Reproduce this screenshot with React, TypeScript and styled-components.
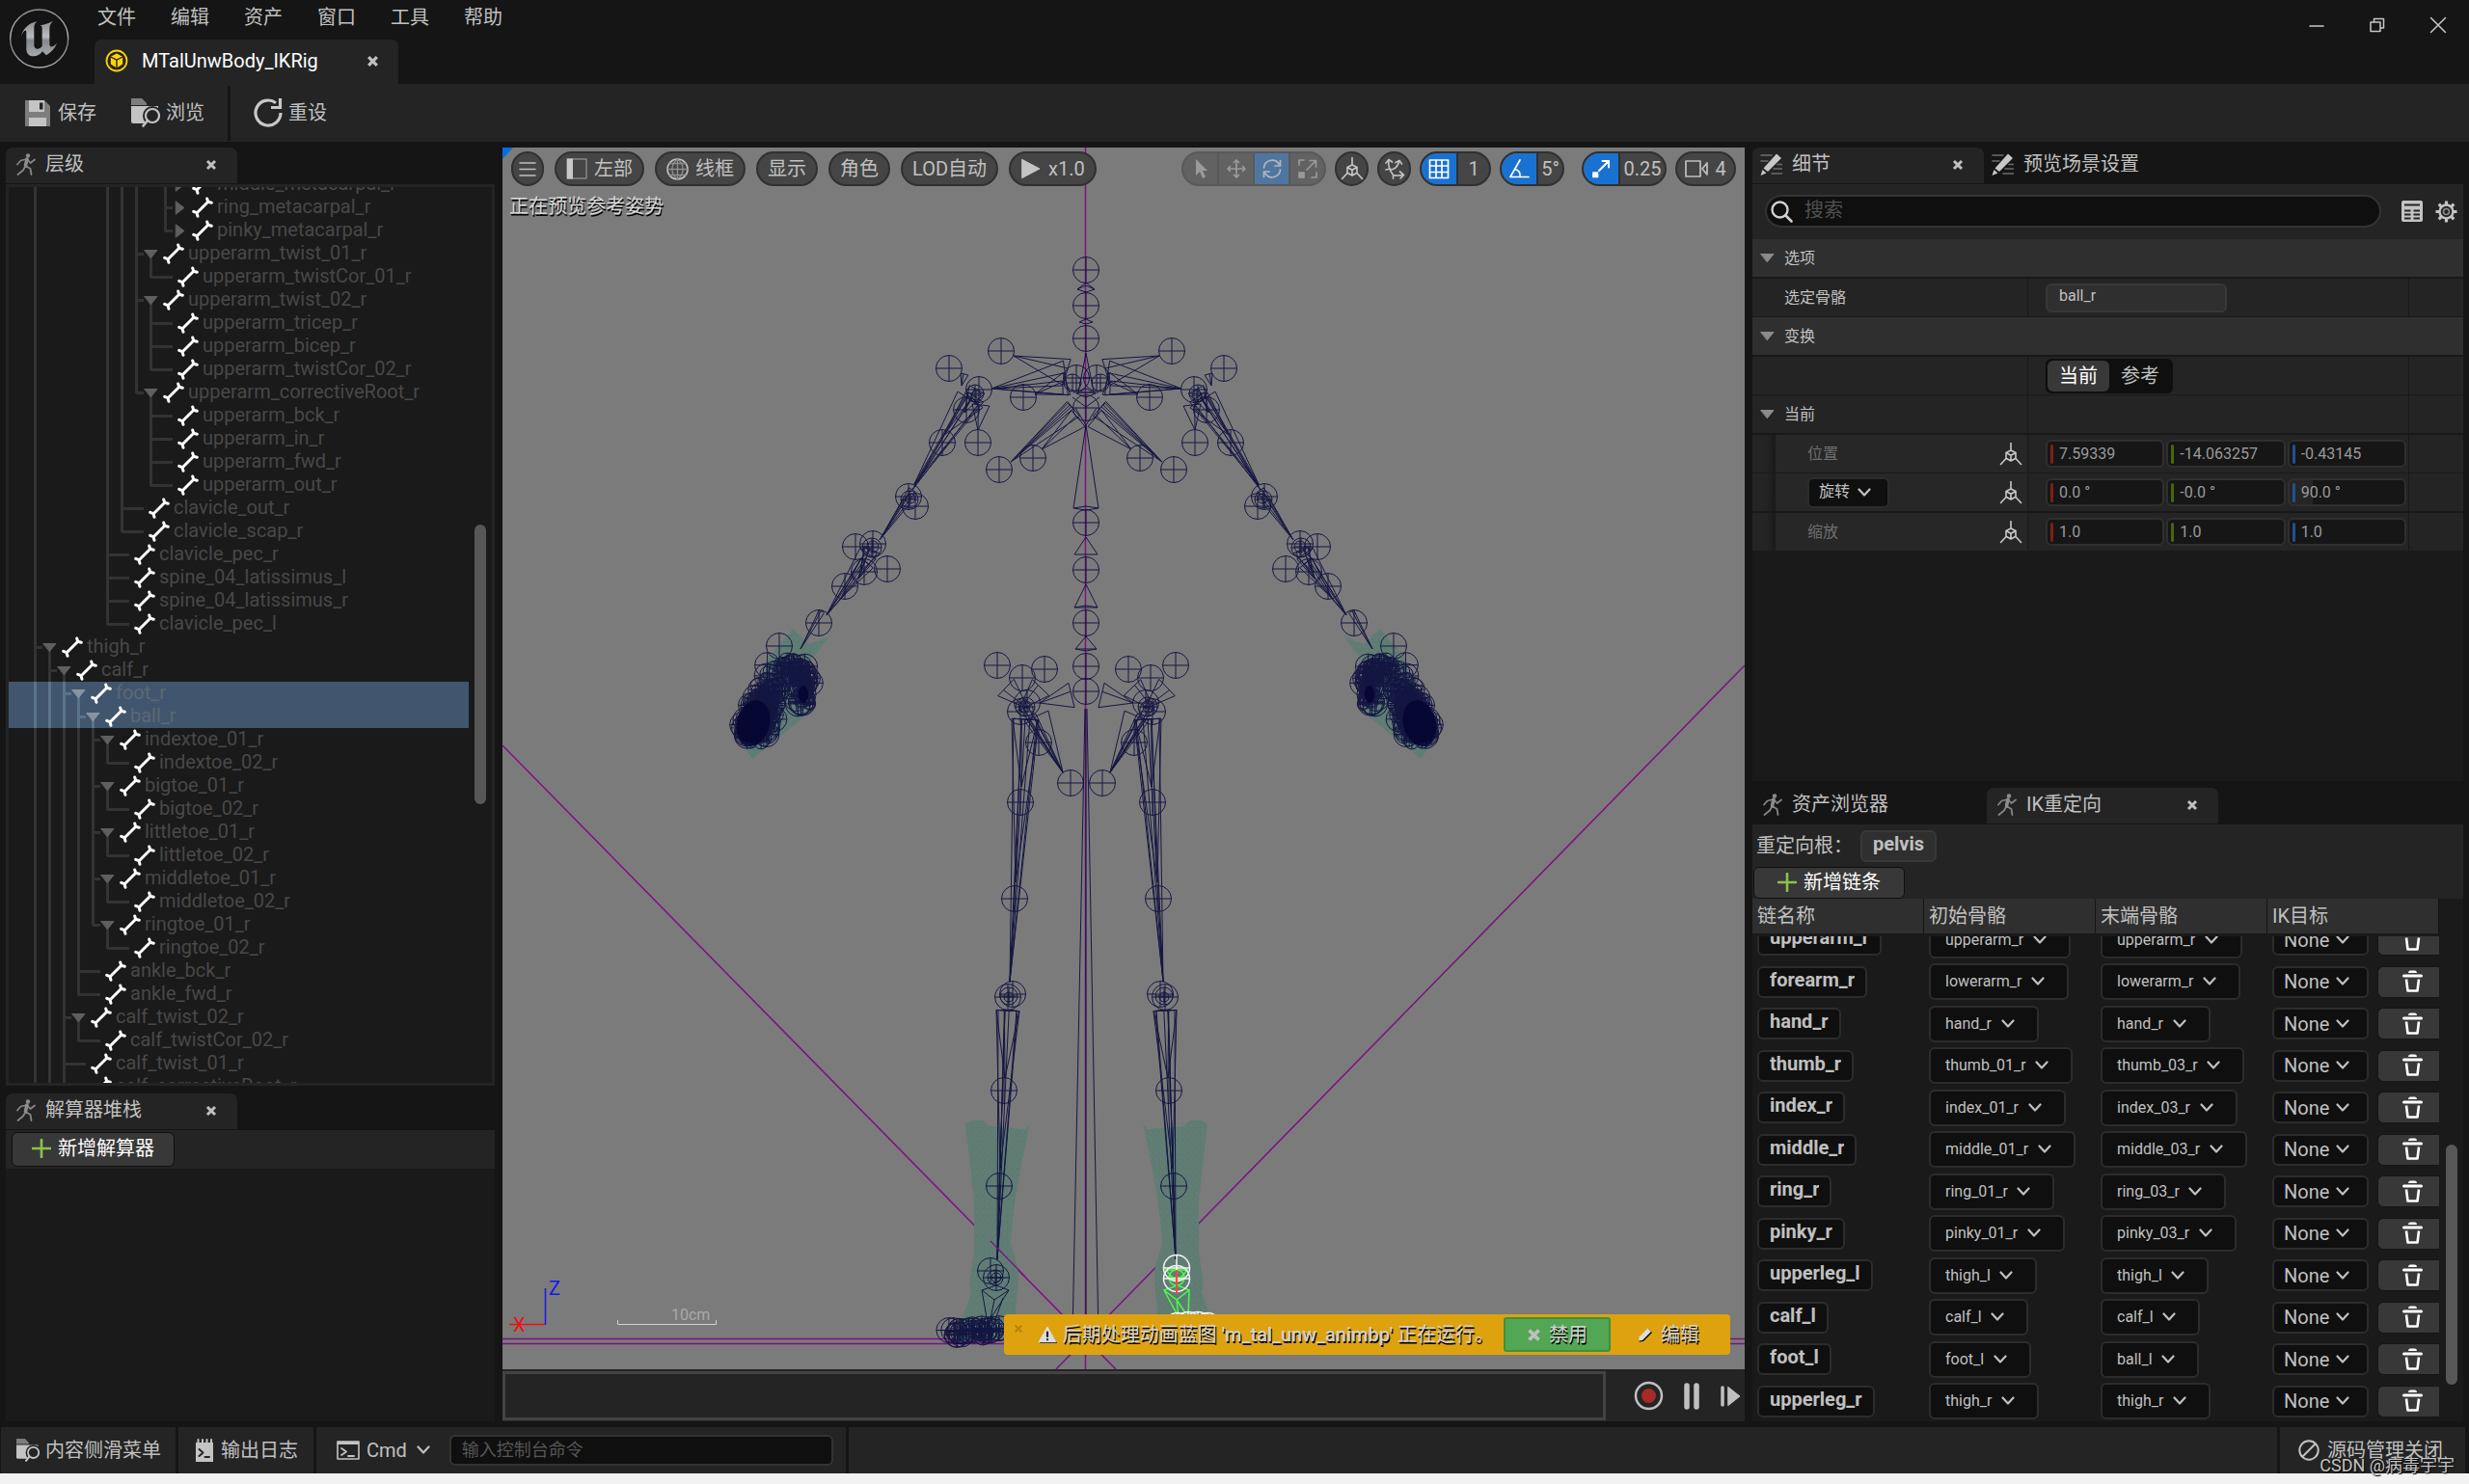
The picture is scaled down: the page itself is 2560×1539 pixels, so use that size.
import React from "react";
import styled, { createGlobalStyle, css } from "styled-components";

const GlobalStyle = createGlobalStyle`
  * { box-sizing: border-box; }
  html, body { margin: 0; background: #f2f2f2; }
  body, button, input, select {
    font-family: Roboto, "Noto Sans CJK SC", sans-serif;
    font-size: 20px;
    line-height: 24px;
    color: #c0c0c0;
  }
  button, input, select { margin: 0; }
  button { cursor: pointer; }
  input:focus, select:focus, button:focus { outline: none; }
`;

/* ---------- palette ---------- */
const c = {
  title: "#151515",
  panel: "#242424",
  recess: "#1a1a1a",
  header: "#2f2f2f",
  field: "#0f0f0f",
  line: "#333333",
  button: "#383838",
};

/* ---------- icons ---------- */
type IconProps = { w: number; h?: number; box?: string; children: React.ReactNode };
const IconSvg = styled.svg`
  display: block;
  flex: none;
  fill: none;
  stroke-linecap: round;
  stroke-linejoin: round;
`;
const Icon = ({ w, h = w, box, children }: IconProps) => (
  <IconSvg width={w} height={h} viewBox={box ?? `0 0 ${w} ${h}`} aria-hidden="true">
    {children}
  </IconSvg>
);

const Logo = () => (
  <Icon w={64} box="29 24 192 192">
    <defs>
      <linearGradient id="steel" x1="0" y1="0" x2="0" y2="1">
        <stop offset="0" stopColor="#8b8d90" />
        <stop offset="0.45" stopColor="#b9bbbe" />
        <stop offset="0.55" stopColor="#85898d" />
        <stop offset="1" stopColor="#a5a9ad" />
      </linearGradient>
    </defs>
    <circle cx="124" cy="120" r="90" fill="#141414" stroke="url(#steel)" strokeWidth="4" />
    <path
      fill="url(#steel)"
      d="M68 112C74 88 92 72 118 66C110 72 108 78 108 86V140C108 149 114 153 120 152C126 151 130 147 133 143V86C133 82 130 80 126 79C140 77 152 73 167 65C159 73 156 80 156 88V136C156 144 160 147 165 145C170 143 174 139 179 135C172 152 160 164 146 172L134 160C127 170 117 175 107 175C93 175 84 167 84 152V101C84 94 81 92 77 97C73 101 71 106 68 112Z"
    />
  </Icon>
);

const CloseIcon = ({ size = 12, width = 3 }) => (
  <Icon w={size} box="0 0 12 12">
    <path d="M2 2L10 10M10 2L2 10" stroke="#c0c0c0" strokeWidth={width} strokeLinecap="butt" />
  </Icon>
);

const CubeBadge = () => (
  <Icon w={24}>
    <circle cx="12" cy="12" r="10.5" stroke="#ffd400" strokeWidth="1.8" />
    <path d="M12 4.6L18.2 7.8V15.6L12 19.4L5.8 15.6V7.8Z" fill="#ffd400" />
    <path d="M5.8 8L12 11.2L18.2 8M12 11.2V19.4" stroke="#242424" strokeWidth="1.4" />
  </Icon>
);

const SaveIcon = () => (
  <Icon w={28} h={27}>
    <path d="M0 0H20L26 6V27H0Z" fill="#7d7d7d" />
    <path d="M4 0H20V12H4ZM4 18H22V27H4Z" fill="#c4c4c4" />
    <path d="M15 2.500H18.500V9.500H15Z" fill="#242424" />
  </Icon>
);

const BrowseIcon = ({ size = 30 }) => (
  <Icon w={size} box="0 0 30 30">
    <path d="M0 0H11L16 5V7H0Z" fill="#7d7d7d" />
    <path d="M0 8H28V10L13 26H2Q0 26 0 24Z" fill="#c4c4c4" />
    <circle cx="22" cy="18" r="10" fill="#242424" />
    <circle cx="22" cy="18" r="7" stroke="#c4c4c4" strokeWidth="2.200" />
    <path d="M17 23L12.500 28.500" stroke="#c4c4c4" strokeWidth="2.600" />
  </Icon>
);

const ResetIcon = () => (
  <Icon w={30}>
    <path d="M28 15A13 13 0 1 1 23 4.800" stroke="#c8c8c8" strokeWidth="3.200" strokeLinecap="butt" />
    <path d="M18 9.500H27.500V0" stroke="#c8c8c8" strokeWidth="3.200" strokeLinecap="butt" strokeLinejoin="miter" />
  </Icon>
);

const RunnerIcon = () => (
  <Icon w={20} h={24}>
    <circle cx="12" cy="2.500" r="2.200" fill="#8c8c8c" />
    <path
      d="M10.500 6L4.500 7.500L1 11.500M11.500 6.500L14.500 10L19 6.500M11 6L9.500 13L7 17.500L1.500 22M9.500 13L14.500 16L15.500 22"
      stroke="#858585"
      strokeWidth="1.800"
    />
    <path d="M11 6L9.500 12.500" stroke="#8c8c8c" strokeWidth="3.600" />
  </Icon>
);

const PencilListIcon = () => (
  <Icon w={23} h={24}>
    <path d="M1 2H12M1 8H8M14 16H23M12 21H23M18 11.500H23" stroke="#6c6c6c" strokeWidth="1.600" />
    <path d="M17 0.500L22 5L8 19L3.500 15.500Z" fill="#c8c8c8" />
    <path d="M2.500 17L6.500 20.500L0.500 23Z" fill="#c8c8c8" />
  </Icon>
);

const BoneIcon = () => (
  <Icon w={22}>
    <path
      d="M5 17L17 5M15.700 2L16.700 5.300L20.300 6.300M1.700 15.300L5 16.700L6 20.300"
      stroke="#ffffff"
      strokeWidth="3"
    />
  </Icon>
);

const Caret = ({ open = true, color = "#5f5f5f" }) => (
  <Icon w={15}>
    {open ? (
      <path d="M1 3.500H14L7.500 11.500Z" fill={color} stroke={color} />
    ) : (
      <path d="M3.500 1L12 7.500L3.500 14Z" fill={color} stroke={color} />
    )}
  </Icon>
);

const ChevronIcon = () => (
  <Icon w={14} h={10}>
    <path d="M1.500 1.500L7 7.500L12.500 1.500" stroke="#c0c0c0" strokeWidth="2.200" />
  </Icon>
);

const PlusIcon = () => (
  <Icon w={20}>
    <path d="M10 1V19M1 10H19" stroke="#8bc24a" strokeWidth="2.600" />
  </Icon>
);

const AxesCubeIcon = () => (
  <Icon w={24}>
    <path
      d="M12 0.500V8M12 8L17 10.500V16.300L12 19L7 16.300V10.500ZM7 10.500L12 13.300L17 10.500M12 13.300V19M7 16.500L1.500 22.500M17 16.500L22.500 22.500"
      stroke="#c8c8c8"
      strokeWidth="1.600"
    />
  </Icon>
);

const TrashIcon = () => (
  <Icon w={21} h={24}>
    <path d="M6 3Q6 0.500 8 0.500H13Q15 0.500 15 3Z" fill="#fff" />
    <path d="M1.500 6H19.500" stroke="#fff" strokeWidth="3" />
    <path d="M4 9.500L5.500 21.500H15.500L17 9.500" stroke="#fff" strokeWidth="2.600" strokeLinecap="butt" />
  </Icon>
);

/* ---------- shell ---------- */
const Window = styled.div`
  display: flex;
  flex-direction: column;
  height: 100vh;
  min-height: 1000px;
  padding-bottom: 11px;
  background: linear-gradient(#f2f2f2, #f2f2f2) 0 100% / 100% 11px no-repeat ${c.title};
`;
const TitleBar = styled.header`
  display: flex;
  height: 87px;
  flex: none;
  padding-left: 9px;
`;
const LogoBox = styled.div`
  width: 89px;
  padding-top: 8px;
`;
const TitleMain = styled.div`
  display: flex;
  flex-direction: column;
  justify-content: space-between;
  flex: 1;
`;
const MenuBar = styled.nav`
  display: flex;
  gap: 36px;
  padding: 6px 0 0 3px;
`;
const PlainButton = styled.button`
  display: flex;
  align-items: center;
  gap: 6px;
  padding: 0;
  border: 0;
  background: none;
`;
const DocTab = styled.div`
  display: flex;
  align-items: center;
  width: 315px;
  height: 46px;
  padding: 0 20px 2px 11px;
  border-radius: 7px 7px 0 0;
  background: ${c.panel};
  color: #ffffff;
  span { flex: 1; padding-left: 14px; }
`;
const WindowButtons = styled.div`
  display: flex;
  gap: 45px;
  height: 52px;
  padding-right: 23px;
`;
const Toolbar = styled.div`
  display: flex;
  align-items: center;
  flex: none;
  height: 60px;
  padding-left: 26px;
  background: ${c.panel};
`;
const ToolbarGroup = styled.div`
  display: flex;
  align-items: center;
  gap: 36px;
  height: 57px;
  padding-right: 24px;
  & + & { padding-left: 24px; border-left: 3px solid ${c.title}; }
`;
const Workspace = styled.main`
  display: grid;
  grid-template-columns: 507px minmax(0, 1fr) 737px;
  gap: 8px;
  flex: 1;
  min-height: 0;
  padding: 6px;
`;
const Column = styled.div<{ $rows: string; $gap: number }>`
  display: grid;
  grid-template-rows: ${(p) => p.$rows};
  gap: ${(p) => p.$gap}px;
  min-height: 0;
`;
const Dock = styled.section`
  display: flex;
  flex-direction: column;
  min-height: 0;
  overflow: hidden;
`;
const TabStrip = styled.div<{ $gap?: number }>`
  display: flex;
  flex: none;
  gap: ${(p) => p.$gap ?? 0}px;
  margin-bottom: 1px;
`;
const Tab = styled.div<{ $active?: boolean }>`
  display: flex;
  align-items: center;
  width: 240px;
  height: 37px;
  padding: 0 21px 2px 11px;
  border-radius: 7px 7px 0 0;
  background: ${(p) => (p.$active ? c.panel : "transparent")};
  span { flex: 1; padding: 0 0 2px 10px; white-space: nowrap; }
`;
const DetailTabs = styled(TabStrip)`
  ${Tab} { padding-left: 8px; }
`;
const DockTab = ({ icon, label, active, onClose }: { icon: React.ReactNode; label: string; active?: boolean; onClose?: boolean }) => (
  <Tab $active={active}>
    {icon}
    <span>{label}</span>
    {onClose && (
      <PlainButton aria-label="关闭">
        <CloseIcon />
      </PlainButton>
    )}
  </Tab>
);

const Track = styled.div`
  display: flex;
  flex-direction: column;
  width: 12px;
  flex: none;
`;
const TrackPart = styled.div<{ $grow: number; $thumb?: boolean }>`
  flex: ${(p) => p.$grow} 0 0;
  border-radius: 6px;
  background: ${(p) => (p.$thumb ? "#575757" : "transparent")};
`;
const ScrollTrack = ({ before, thumb, after }: { before: number; thumb: number; after: number }) => (
  <Track>
    <TrackPart $grow={before} />
    <TrackPart $grow={thumb} $thumb />
    <TrackPart $grow={after} />
  </Track>
);

/* ---------- bone hierarchy ---------- */
type Bone = { name: string; depth: number; state: "leaf" | "open" | "closed"; selected?: boolean };
const leaf = (depth: number, name: string): Bone => ({ depth, name, state: "leaf" });
const open = (depth: number, name: string, selected = false): Bone => ({ depth, name, state: "open", selected });
const closed = (depth: number, name: string): Bone => ({ depth, name, state: "closed" });

const bones: Bone[] = [
  closed(10, "middle_metacarpal_r"),
  closed(10, "ring_metacarpal_r"),
  closed(10, "pinky_metacarpal_r"),
  open(8, "upperarm_twist_01_r"),
  leaf(9, "upperarm_twistCor_01_r"),
  open(8, "upperarm_twist_02_r"),
  leaf(9, "upperarm_tricep_r"),
  leaf(9, "upperarm_bicep_r"),
  leaf(9, "upperarm_twistCor_02_r"),
  open(8, "upperarm_correctiveRoot_r"),
  leaf(9, "upperarm_bck_r"),
  leaf(9, "upperarm_in_r"),
  leaf(9, "upperarm_fwd_r"),
  leaf(9, "upperarm_out_r"),
  leaf(7, "clavicle_out_r"),
  leaf(7, "clavicle_scap_r"),
  leaf(6, "clavicle_pec_r"),
  leaf(6, "spine_04_latissimus_l"),
  leaf(6, "spine_04_latissimus_r"),
  leaf(6, "clavicle_pec_l"),
  open(1, "thigh_r"),
  open(2, "calf_r"),
  open(3, "foot_r", true),
  open(4, "ball_r", true),
  open(5, "indextoe_01_r"),
  leaf(6, "indextoe_02_r"),
  open(5, "bigtoe_01_r"),
  leaf(6, "bigtoe_02_r"),
  open(5, "littletoe_01_r"),
  leaf(6, "littletoe_02_r"),
  open(5, "middletoe_01_r"),
  leaf(6, "middletoe_02_r"),
  open(5, "ringtoe_01_r"),
  leaf(6, "ringtoe_02_r"),
  leaf(4, "ankle_bck_r"),
  leaf(4, "ankle_fwd_r"),
  open(3, "calf_twist_02_r"),
  leaf(4, "calf_twistCor_02_r"),
  leaf(3, "calf_twist_01_r"),
  open(3, "calf_correctiveRoot_r"),
];
/* levels whose siblings continue below the last loaded row */
const continuing = [0, 1, 2];

const hasLaterSibling = (index: number, level: number) => {
  for (let j = index + 1; j < bones.length; j++) {
    if (bones[j].depth <= level) return false;
    if (bones[j].depth === level + 1) return true;
  }
  return continuing.includes(level);
};

const TreePanel = styled.div`
  display: flex;
  flex: 1;
  gap: 6px;
  min-height: 0;
  padding-right: 6px;
  border: 3px solid ${c.panel};
  background: ${c.recess};
`;
const TreeView = styled.ul`
  flex: 1;
  margin: 0;
  padding: 0;
  overflow: hidden;
  list-style: none;
`;
const TreeRow = styled.li<{ $selected?: boolean }>`
  --guide: ${(p) => (p.$selected ? "#5c748a" : "#333333")};
  display: flex;
  align-items: center;
  height: 24px;
  padding-left: 20px;
  background: ${(p) => (p.$selected ? "#41566e" : "transparent")};
  color: ${(p) => (p.$selected ? "#5d6873" : "#484848")};
  white-space: nowrap;
  &:first-child { margin-top: -15px; }
`;
const bar = (pos: string, size: string) =>
  `linear-gradient(var(--guide), var(--guide)) ${pos} / ${size} no-repeat`;
const Guide = styled.span<{ $down: boolean; $branch: boolean }>`
  align-self: stretch;
  width: 15px;
  flex: none;
  background: ${(p) =>
    [
      p.$down ? bar("6px 0", "3px 100%") : p.$branch ? bar("6px 0", "3px 13px") : "",
      p.$branch ? bar("100% 11px", "8px 3px") : "",
    ]
      .filter(Boolean)
      .join(", ") || "none"};
`;
const Toggle = styled.span<{ $state: Bone["state"] }>`
  display: flex;
  align-items: center;
  align-self: stretch;
  width: 15px;
  margin-right: 5px;
  flex: none;
  background: ${(p) =>
    p.$state === "leaf" ? bar("0 11px", "15px 3px") : p.$state === "open" ? bar("6px 12px", "3px 12px") : "none"};
`;
const BoneName = styled.span`
  padding: 0 0 2px 4px;
`;

const Hierarchy = () => (
  <TreePanel>
    <TreeView>
      {bones.map((bone, i) => (
        <TreeRow key={bone.name} $selected={bone.selected}>
          {Array.from({ length: bone.depth }, (_, level) => (
            <Guide key={level} $down={hasLaterSibling(i, level)} $branch={level === bone.depth - 1} />
          ))}
          <Toggle $state={bone.state}>
            {bone.state !== "leaf" && (
              <Caret open={bone.state === "open"} color={bone.selected ? "#8794a1" : "#5f5f5f"} />
            )}
          </Toggle>
          <BoneIcon />
          <BoneName>{bone.name}</BoneName>
        </TreeRow>
      ))}
    </TreeView>
    <ScrollTrack before={350} thumb={290} after={289} />
  </TreePanel>
);

const AddButton = styled.button<{ $height: number; $pad: number }>`
  display: flex;
  align-items: center;
  gap: 7px;
  height: ${(p) => p.$height}px;
  padding: 0 ${(p) => p.$pad}px 2px;
  border: 1px solid ${c.field};
  border-radius: 6px;
  background: ${c.button};
  color: #ffffff;
  white-space: nowrap;
`;
const StackToolbar = styled.div`
  flex: none;
  padding: 2px 6px;
  background: ${c.panel};
`;
const EmptyBody = styled.div`
  flex: 1;
  background: ${c.recess};
`;

/* ---------- viewport drawing ---------- */
const NAVY = "#06063a";
type P = [number, number];

const joints: P[] = [
  [1038, 364], [984, 382], [1015, 404], [1061, 412], [1116, 392], [1002, 425], [977, 459], [1014, 459],
  [1071, 475], [1036, 487], [942, 515], [949, 525], [905, 564], [887, 567], [920, 590], [896, 593],
  [876, 608], [849, 646], [808, 670], [1034, 690], [1060, 703], [1083, 694], [1058, 738], [1077, 770],
  [1110, 812], [1058, 832], [1052, 932], [1045, 1034], [1050, 1031], [1041, 1131], [1036, 1230], [1065, 729],
];
const smallJoints: [number, number, number][] = [
  [1011, 408, 9], [1012, 410, 5], [943, 518, 9], [944, 517, 5], [904, 568, 10], [905, 567, 6],
  [1063, 733, 10], [1062, 733, 6], [1046, 1033, 9], [1046, 1034, 5], [1112, 397, 9],
];
const spine = [280, 317, 351, 423, 542, 591, 646, 691, 717];
/* wedge: x, y of the base, x, y of the tip, half width of the base */
const wedges: [number, number, number, number, number][] = [
  [1106, 386, 1051, 369, 14], [1105, 392, 1028, 403, 18], [1106, 398, 1073, 409, 12], [1102, 402, 1030, 403, 7],
  [1113, 424, 1048, 479, 10], [1118, 434, 1080, 466, 11], [1110, 421, 1048, 479, 4],
  [1004, 413, 948, 502, 13], [1008, 416, 946, 508, 7], [1010, 415, 979, 451, 12], [1017, 420, 1014, 446, 9],
  [1012, 412, 948, 504, 9], [1013, 404, 1000, 428, 9],
  [1000, 388, 997, 400, 4], [946, 508, 914, 557, 4], [940, 520, 912, 560, 4],
  [900, 574, 857, 638, 10], [899, 584, 872, 620, 8], [903, 571, 890, 600, 7], [852, 634, 830, 673, 3],
  [897, 582, 857, 638, 5], [904, 570, 893, 592, 9],
  [1043, 713, 1066, 735, 12], [1079, 713, 1056, 737, 12], [1111, 721, 1078, 729, 13],
  [1076, 742, 1102, 801, 12], [1068, 744, 1102, 801, 7], [1062, 734, 1102, 801, 4],
  [1063, 746, 1059, 816, 13], [1063, 746, 1053, 915, 14], [1063, 746, 1047, 1018, 12], [1070, 746, 1047, 1018, 7],
  [1045, 1048, 1042, 1118, 12], [1045, 1048, 1037, 1212, 12], [1045, 1048, 1034, 1306, 10], [1048, 1048, 1034, 1306, 6],
];
const wedgePath = ([bx, by, tx, ty, w]: [number, number, number, number, number]) => {
  const len = Math.hypot(tx - bx, ty - by);
  const nx = (-(ty - by) / len) * w;
  const ny = ((tx - bx) / len) * w;
  return `M${bx + nx} ${by + ny}L${tx} ${ty}L${bx - nx} ${by - ny}ZM${bx + nx * 0.3} ${by + ny * 0.3}L${tx} ${ty}`;
};
const Joint = ({ x, y, r = 13.5 }: { x: number; y: number; r?: number }) => (
  <path
    d={`M${x - r} ${y}A${r} ${r} 0 1 1 ${x + r} ${y}A${r} ${r} 0 1 1 ${x - r} ${y}H${x + r}M${x} ${y - r}V${y + r}`}
  />
);

/* repeatable scatter used for the dense finger and toe joints */
const scatter = (count: number, seed: number, place: (t: number, a: number, b: number) => P): P[] => {
  let s = seed;
  const next = () => (s = (s * 16807) % 2147483647) / 2147483647;
  return Array.from({ length: count }, () => place(next(), next() + next() - 1, next() + next() - 1));
};
const fingers = scatter(170, 77, (t, a, b) => [808 - 28 * Math.sqrt(t) + a * 17, 696 + 66 * Math.sqrt(t) + b * 12]);
const knuckles = scatter(110, 53, (t, a, b) => [790 - 12 * t + a * 15, 716 + 46 * t + b * 9]);
const palm = scatter(24, 15, (t, a, b) => [812 + 18 * t + a * 10, 694 + b * 10]);
const thumb = scatter(56, 31, (t, a, b) => [834 + a * 9, 694 + t * 36 + b * 6]);
const toes = scatter(34, 9, (t, a, b) => [984 + t * 52 + a * 4, 1380 + b * 6]);

const HalfBody = () => (
  <g>
    <path
      d="M1001 1165L1008 1162H1019L1027 1168L1063 1171L1068 1165C1061 1200 1051 1240 1048 1288C1050 1300 1056 1310 1056 1321C1056 1340 1052 1350 1053 1390H990L1007 1340C1002 1330 1010 1310 1010 1292V1245Z"
      fill="url(#mesh)"
    />
    <path d="M822 652L839 668L860 660L840 686L838 740L780 787L768 770L798 680Z" fill="url(#mesh)" />
    <g stroke={NAVY} fill="none" opacity="0.85">
      {joints.map(([x, y], i) => <Joint key={i} x={x} y={y} />)}
      {smallJoints.map(([x, y, r], i) => <Joint key={i} x={x} y={y} r={r} />)}
      {wedges.map((w, i) => <path key={i} d={wedgePath(w)} />)}
      {fingers.map(([x, y], i) => <Joint key={i} x={x} y={y} r={i % 3 ? 8 : 13} />)}
      {knuckles.map(([x, y], i) => <Joint key={i} x={x} y={y} r={5} />)}
      {palm.map(([x, y], i) => <Joint key={i} x={x} y={y} r={9} />)}
      {thumb.map(([x, y], i) => <Joint key={i} x={x} y={y} r={i % 3 ? 6 : 13} />)}
    </g>
    <g fill="#02022f" opacity="0.75">
      <ellipse cx="781" cy="750" rx="17" ry="24" transform="rotate(14 781 750)" />
      <ellipse cx="833" cy="720" rx="5" ry="9" />
    </g>
  </g>
);

const Scene = styled.svg`
  position: absolute;
  inset: 0;
  display: block;
  width: 100%;
  height: 100%;
`;
const SkeletonScene = () => (
  <Scene viewBox="521 153 1288 1267" preserveAspectRatio="xMidYMid slice" role="img" aria-label="骨骼">
    <defs>
      <pattern id="mesh" width="6" height="7" patternUnits="userSpaceOnUse">
        <rect width="6" height="7" fill="#637d75" />
        <path d="M0 0H6M0 0V7M0 7L6 0" stroke="#587b70" strokeWidth="1" fill="none" />
      </pattern>
    </defs>
    <path d="M521 153H532L521 165Z" fill="#0070e0" />
    <g stroke="#7d1180" strokeWidth="1.500" fill="none">
      <path d="M521 773L1157 1420M1809 690L1095 1420" />
      <path d="M521 1388.500H1809M521 1393.500H1809" />
      <path d="M1125.500 153V1420" strokeWidth="1.500" />
    </g>
    <HalfBody />
    <g transform="translate(2253 0) scale(-1 1)">
      <HalfBody />
    </g>
    <path d="M1027 1287L1063 1324" stroke="#7d1180" strokeWidth="1.200" />
    <g stroke={NAVY} fill="none" opacity="0.85">
      {spine.map((y) => <Joint key={y} x={1126} y={y} />)}
      <path d="M1126 293L1117 300L1126 303L1135 300ZM1126 331L1119 334L1126 336L1133 334ZM1117 300L1126 296L1135 300" />
      <path d="M1126 366L1118 407H1134ZM1116 408L1126 403L1136 408L1126 412Z M1113 407H1139" />
      <path d="M1126 441L1113 527L1126 529L1139 527ZM1113 527L1126 525L1139 527" />
      <path d="M1126 557L1114 575H1138ZM1126 606L1114 630L1126 628L1138 630ZM1126 660L1115 673L1126 675L1137 673ZM1114 630H1138M1115 673H1137" />
      <path d="M1126 422L1112 412M1126 422L1140 412M1115 423L1126 441L1137 423" />
      <path d="M1125 735L1112 1388M1127 735L1139 1388M1126 735V1388" />
      <Joint x={1027} y={1318} />
      <Joint x={1033} y={1325} />
      <Joint x={1032} y={1325} r={8} />
      <Joint x={1033} y={1325} r={5} />
      <path d="M1018 1338L1031 1348L1046 1338L1033 1333ZM1018 1338L1024 1372L1046 1338M1031 1348L1026 1372M1040 1346L1030 1374" />
      {toes.map(([x, y], i) => <Joint key={i} x={x} y={y} r={i % 2 ? 9 : 13} />)}
    </g>
    <g fill="none" strokeWidth="1.500">
      <g stroke="#4dfa4d">
        <path d="M1207 1338L1220 1348L1233 1338L1221 1333ZM1207 1338L1222 1366L1220 1348M1233 1338L1232 1366L1220 1348M1209 1317H1231L1220 1330Z" />
        <Joint x={1220} y={1325} r={8} />
      </g>
      <g stroke="#f2f2f2">
        <Joint x={1220} y={1315} />
        <Joint x={1220} y={1326} />
        <Joint x={1221} y={1375} />
        <Joint x={1232} y={1374} />
        <Joint x={1242} y={1374} />
        <Joint x={1252} y={1375} />
      </g>
      <path d="M1220 1317V1342" stroke="#ff4a3a" strokeWidth="2" />
    </g>
    <path d="M565.500 1336V1374" stroke="#1616f0" strokeWidth="1.500" />
    <path d="M528 1373.500H565" stroke="#ee1010" strokeWidth="1.500" />
    <path d="M640.500 1369V1373.500H742.500V1369" stroke="#d0d0d0" fill="none" />
    <g fontFamily="Roboto, sans-serif" fontSize="20">
      <text x="569" y="1343" fill="#1616f0">Z</text>
      <text x="532" y="1381" fill="#ee1010">X</text>
      <text x="696" y="1369" fill="#a9a9a9" fontSize="16">10cm</text>
    </g>
  </Scene>
);

/* ---------- viewport ui ---------- */
const ViewportDock = styled.section`
  display: flex;
  flex-direction: column;
  min-height: 0;
`;
const Viewport = styled.div`
  position: relative;
  display: flex;
  flex-direction: column;
  flex: 1;
  min-height: 0;
  overflow: hidden;
  background: #7b7b7b;
`;
const Overlay = styled.div`
  position: relative;
  display: flex;
  justify-content: space-between;
  padding: 4px 9px 0;
`;
const PillRow = styled.div<{ $gap: number }>`
  display: flex;
  gap: ${(p) => p.$gap}px;
`;
const pill = css`
  border: 2px solid #303030;
  border-radius: 18px;
  background: #454545;
`;
const Pill = styled.button<{ $width?: number }>`
  ${pill}
  display: flex;
  align-items: center;
  justify-content: center;
  gap: 7px;
  height: 36px;
  width: ${(p) => (p.$width ? `${p.$width}px` : "auto")};
  padding: 0 ${(p) => (p.$width ? 0 : 10)}px;
  white-space: nowrap;
`;
const Segmented = styled.div<{ $width: number; $dim?: boolean; $spaced?: boolean }>`
  ${pill}
  display: flex;
  width: ${(p) => p.$width}px;
  height: 36px;
  overflow: hidden;
  margin-left: ${(p) => (p.$spaced ? 9 : 0)}px;
  opacity: ${(p) => (p.$dim ? 0.45 : 1)};
`;
const Segment = styled.button<{ $on?: boolean; $fixed?: boolean }>`
  display: flex;
  flex: ${(p) => (p.$fixed ? "0 0 36px" : "1 1 0")};
  align-items: center;
  justify-content: center;
  padding: 0;
  border: 0;
  background: ${(p) => (p.$on ? "#1a72d0" : "transparent")};
  & + & { border-left: 2px solid #303030; }
`;
const ViewportNote = styled.p`
  position: relative;
  margin: 9px 0 0 7px;
  color: #d6d6d6;
  text-shadow: 1px 2px 0 #000000;
`;
const Notice = styled.div`
  position: absolute;
  right: 15px;
  bottom: 15px;
  display: flex;
  align-items: center;
  height: 42px;
  padding: 0 4px 0 10px;
  border-radius: 4px;
  background: #dda20d;
  color: #d0d0d0;
  text-shadow: 1px 2px 0 #000000;
  white-space: nowrap;
`;
const NoticeText = styled.span`
  padding: 0 10px 0 6px;
  b { font-weight: 500; }
`;
const NoticeDismiss = styled(PlainButton)`
  align-self: flex-start;
  padding: 10px 15px 0 0;
  opacity: 0.5;
  path { stroke: #8a6000; }
`;
const NoticeButton = styled.button<{ $green?: boolean }>`
  display: flex;
  align-items: center;
  justify-content: center;
  gap: 8px;
  width: ${(p) => (p.$green ? 111 : 120)}px;
  height: 36px;
  border: 2px solid ${(p) => (p.$green ? "#3c913f" : "transparent")};
  border-radius: 3px;
  background: ${(p) => (p.$green ? "#53a653" : "transparent")};
  color: #d0d0d0;
  text-shadow: 1px 2px 0 #000000;
`;
const Timeline = styled.div`
  display: flex;
  flex: none;
  gap: 29px;
  height: 54px;
  padding: 2px 4px 1px 0;
  background: ${c.panel};
`;
const TimelineTrack = styled.div`
  flex: 1;
  border: 3px solid #434343;
`;
const Transport = styled.div`
  display: flex;
  align-items: center;
  gap: 21px;
`;

const ToolIcon = ({ children, color = "#c0c0c0" }: { children: React.ReactNode; color?: string }) => (
  <Icon w={24}>
    <g stroke={color} strokeWidth="1.700">{children}</g>
  </Icon>
);

const ViewportPanel = () => (
  <ViewportDock>
    <Viewport>
      <SkeletonScene />
      <Overlay>
        <PillRow $gap={11}>
          <Pill $width={34} aria-label="视口选项">
            <Icon w={18}><path d="M1 3H17M1 9.500H17M1 16H17" stroke="#c0c0c0" strokeWidth="1.600" /></Icon>
          </Pill>
          <Pill>
            <Icon w={22}>
              <path d="M1 1H21V21H1Z" stroke="#858585" strokeWidth="1.500" />
              <path d="M1 0.500H7V21.500H1Z" fill="#c8c8c8" />
            </Icon>
            左部
          </Pill>
          <Pill>
            <Icon w={23}>
              <circle cx="11.500" cy="11.500" r="10.500" stroke="#c0c0c0" strokeWidth="1.600" />
              <path d="M11.500 1V22M1 11.500H22M3 5.500H20M3 17.500H20M11.500 1C4 7 4 16 11.500 22C19 16 19 7 11.500 1" stroke="#8f8f8f" strokeWidth="1.300" />
            </Icon>
            线框
          </Pill>
          <Pill>显示</Pill>
          <Pill>角色</Pill>
          <Pill>LOD自动</Pill>
          <Pill>
            <Icon w={22}><path d="M2 1.500L20 11L2 20.500Z" fill="#c4c4c4" stroke="#c4c4c4" /></Icon>
            x1.0
          </Pill>
        </PillRow>
        <PillRow $gap={9}>
          <Segmented $width={150} $dim>
            <Segment aria-label="选择">
              <ToolIcon><path d="M7 2V19L11 15L14 22L17 20.500L14 14H19Z" fill="#c0c0c0" stroke="none" /></ToolIcon>
            </Segment>
            <Segment aria-label="移动">
              <ToolIcon><path d="M12 3V21M3 12H21M9.500 5.500L12 3L14.500 5.500M9.500 18.500L12 21L14.500 18.500M5.500 9.500L3 12L5.500 14.500M18.500 9.500L21 12L18.500 14.500" /></ToolIcon>
            </Segment>
            <Segment $on aria-label="旋转">
              <ToolIcon color="#ffffff"><path d="M3.500 11A8.500 8.500 0 0 1 19 7M20.500 13A8.500 8.500 0 0 1 5 17M20.500 3.500V9H15M3.500 20.500V15H9" /></ToolIcon>
            </Segment>
            <Segment aria-label="缩放">
              <ToolIcon><path d="M3 8V3H8M16 21H21V16M11 13L20 4M14 3.500H20.500V10" /><path d="M3 16H8V21H3Z" fill="#c0c0c0" /></ToolIcon>
            </Segment>
          </Segmented>
          <Pill $width={35} aria-label="坐标系"><AxesCubeIcon /></Pill>
          <Pill $width={35} aria-label="表面吸附">
            <ToolIcon>
              <path d="M6 2.500C5 8 7 14 10.500 18.500C14 19.500 17 19 21 18.500M3 6L6 2.500L9.500 5M17.500 15L21.500 18.500L18 22M8.500 13C13 12 15.500 9 16.500 5M13 5.500L17 3.500L19.500 7M3 13L7.500 12M10.500 18.500V22" />
            </ToolIcon>
          </Pill>
          <Segmented $width={74}>
            <Segment $on $fixed aria-label="网格吸附">
              <ToolIcon color="#ffffff"><path d="M2.500 3H21.500V21.500H2.500ZM2.500 9H21.500M2.500 15.500H21.500M9 3V21.500M15 3V21.500" /></ToolIcon>
            </Segment>
            <Segment>1</Segment>
          </Segmented>
          <Segmented $width={67}>
            <Segment $on $fixed aria-label="旋转吸附">
              <ToolIcon color="#ffffff"><path d="M13 3L3 20.500H22M8 12.500C12 13.500 13.500 17 13 20.500" /></ToolIcon>
            </Segment>
            <Segment>5°</Segment>
          </Segmented>
          <Segmented $width={88} $spaced>
            <Segment $on $fixed aria-label="缩放吸附">
              <ToolIcon color="#ffffff"><path d="M10 14L19.500 4.500M13.500 4H20V10.500" strokeWidth="2" /><path d="M4 16H8.500V20.500H4Z" fill="#fff" /></ToolIcon>
            </Segment>
            <Segment>0.25</Segment>
          </Segmented>
          <Pill $width={63}>
            <ToolIcon><path d="M1 4H16V20H1ZM23 6V18L18 12Z" /></ToolIcon>
            4
          </Pill>
        </PillRow>
      </Overlay>
      <ViewportNote>正在预览参考姿势</ViewportNote>
      <Notice>
        <NoticeDismiss aria-label="忽略"><CloseIcon size={10} width={2} /></NoticeDismiss>
        <Icon w={20} h={18}>
          <path d="M11 3L20 18H2Z" fill="#000" />
          <path d="M10 1.500L18.500 16.500H1.500Z" fill="#dcdcdc" stroke="#dcdcdc" strokeWidth="1.500" />
          <path d="M10 6.500V11M10 14V14.300" stroke="#222" strokeWidth="2.200" />
        </Icon>
        <NoticeText>后期处理动画蓝图 <b>'m_tal_unw_animbp'</b> 正在运行。</NoticeText>
        <NoticeButton $green><CloseIcon size={15} width={3} />禁用</NoticeButton>
        <NoticeButton>
          <Icon w={16}>
            <path d="M2 11L11 2L15 6L6 15L1.500 15.500Z" fill="#000" />
            <path d="M1.500 10.500L10.500 1.500L14 5L5 14L1 14.500Z" fill="#dcdcdc" />
          </Icon>
          编辑
        </NoticeButton>
      </Notice>
    </Viewport>
    <Timeline>
      <TimelineTrack />
      <Transport>
        <PlainButton aria-label="录制">
          <Icon w={31}><circle cx="15.500" cy="15.500" r="13.500" stroke="#c0c0c0" strokeWidth="2.500" /><circle cx="15.500" cy="15.500" r="7.500" fill="#a82a28" /></Icon>
        </PlainButton>
        <PlainButton aria-label="暂停">
          <Icon w={16} h={28}><path d="M3 3V25M13 3V25" stroke="#c0c0c0" strokeWidth="5.500" /></Icon>
        </PlainButton>
        <PlainButton aria-label="前进一帧">
          <Icon w={22}><path d="M3 2V20" stroke="#c0c0c0" strokeWidth="3.500" /><path d="M9 1.500L21 11L9 20.500Z" fill="#c0c0c0" stroke="#c0c0c0" /></Icon>
        </PlainButton>
      </Transport>
    </Timeline>
  </ViewportDock>
);

/* ---------- details ---------- */
const SearchRow = styled.div`
  display: flex;
  align-items: center;
  flex: none;
  gap: 13px;
  height: 57px;
  padding: 0 6px 1px 13px;
  background: ${c.panel};
`;
const SearchBox = styled.label`
  display: flex;
  align-items: center;
  flex: 1;
  gap: 12px;
  height: 34px;
  margin-right: 8px;
  padding: 0 5px 0 4px;
  border: 2px solid ${c.line};
  border-radius: 17px;
  background: ${c.field};
`;
const BareInput = styled.input`
  flex: 1;
  min-width: 0;
  padding: 0 0 3px;
  border: 0;
  background: none;
  &::placeholder { color: #505050; opacity: 1; }
`;
const DetailBody = styled.div`
  display: flex;
  flex-direction: column;
  flex: 1;
  gap: 1px;
  min-height: 0;
  background: ${c.recess};
  font-size: 16px;
`;
const DetailPair = styled.div`
  display: grid;
  gap: 2px;
  background: #181818;
`;
const DetailRow = styled.div<{ $heading?: boolean }>`
  display: grid;
  grid-template-columns: ${(p) => (p.$heading ? "1fr" : "285px 1fr 56px")};
  gap: 1px;
  height: 39px;
`;
const DetailCell = styled.div<{ $tone?: string; $inset?: boolean; $dim?: boolean }>`
  display: flex;
  align-items: center;
  gap: 10px;
  padding-left: ${(p) => (p.$inset ? 33 : 8)}px;
  background: ${(p) => p.$tone ?? c.panel};
  color: ${(p) => (p.$dim ? "#6e6e6e" : "#c0c0c0")};
`;
const NestedCell = styled(DetailCell)`
  justify-content: space-between;
  padding: 0 5px 0 57px;
  background: linear-gradient(90deg, #242424 0 14px, #1a1a1a 24px, #272727 24px);
`;
const ValueCell = styled(DetailCell)`
  padding: 0 2px 0 18px;
`;
const ReadonlyBox = styled.input`
  width: 188px;
  height: 30px;
  padding: 0 12px 4px;
  border: 2px solid ${c.button};
  border-radius: 6px;
  background: ${c.header};
  font-size: 16px;
`;
const ModeSwitch = styled.div`
  display: flex;
  padding: 2px;
  border-radius: 6px;
  background: ${c.field};
`;
const ModeButton = styled.button<{ $on?: boolean }>`
  height: 32px;
  padding: 0 12px;
  border: 0;
  border-radius: 6px;
  background: ${(p) => (p.$on ? c.button : "transparent")};
  color: ${(p) => (p.$on ? "#ffffff" : "#c0c0c0")};
`;
const Vector = styled.div`
  display: grid;
  grid-template-columns: repeat(3, 1fr);
  gap: 2px;
  flex: 1;
`;
const AxisBox = styled.label<{ $fill?: boolean }>`
  display: flex;
  align-items: center;
  gap: 6px;
  height: 29px;
  padding-left: 3px;
  border: 2px solid #2f2f2f;
  border-radius: 6px;
  background: ${(p) => (p.$fill ? "linear-gradient(90deg, #262626 0 24px, #161616 24px)" : "#161616")};
`;
const AxisMark = styled.span<{ $color: string }>`
  width: 3px;
  height: 20px;
  flex: none;
  border-radius: 2px;
  background: ${(p) => p.$color};
`;
const AxisInput = styled.input`
  width: 100%;
  min-width: 0;
  padding: 0;
  border: 0;
  background: none;
  color: #9a9a9a;
  font-size: 16px;
`;
const SelectWrap = styled.span`
  display: inline-grid;
  align-items: center;
  > * { grid-area: 1 / 1; }
  > svg { justify-self: end; pointer-events: none; }
`;
const selectSkin = css`
  border: 2px solid #2c2c2c;
  border-radius: 6px;
  background: ${c.field};
  appearance: none;
`;
const BoneSelect = styled.select`
  ${selectSkin}
  height: 38px;
  padding: 0 46px 0 15px;
  font-size: 16px;
  & + svg { margin-right: 25px; }
`;
const GoalSelect = styled.select`
  ${selectSkin}
  width: 100px;
  height: 33px;
  padding: 0 0 0 10px;
  & + svg { margin-right: 20px; }
`;
const RotationSelect = styled.select`
  ${selectSkin}
  width: 85px;
  height: 32px;
  padding: 0 0 2px 10px;
  font-size: 16px;
  & + svg { margin-right: 19px; }
`;

const axisColors = ["#7d2012", "#48660c", "#22508f"];
const axisNames = ["X", "Y", "Z"];
const VectorInputs = ({ label, values, fillLast }: { label: string; values: string[]; fillLast?: boolean }) => (
  <Vector>
    {values.map((v, i) => (
      <AxisBox key={axisNames[i]} $fill={fillLast && i === 2}>
        <AxisMark $color={axisColors[i]} />
        <AxisInput aria-label={`${label} ${axisNames[i]}`} defaultValue={v} />
      </AxisBox>
    ))}
  </Vector>
);
const TransformRow = ({ label, name, values, fillLast }: { label: React.ReactNode; name: string; values: string[]; fillLast?: boolean }) => (
  <DetailRow>
    <NestedCell $dim>{label}<AxesCubeIcon /></NestedCell>
    <ValueCell><VectorInputs label={name} values={values} fillLast={fillLast} /></ValueCell>
    <DetailCell />
  </DetailRow>
);

const Details = () => (
  <Dock>
    <DetailTabs>
      <DockTab icon={<PencilListIcon />} label="细节" active onClose />
      <DockTab icon={<PencilListIcon />} label="预览场景设置" />
    </DetailTabs>
    <SearchRow>
      <SearchBox>
        <Icon w={23}><circle cx="9.500" cy="9.500" r="8" stroke="#d0d0d0" strokeWidth="2.400" /><path d="M15.500 15.500L21.500 21.500" stroke="#d0d0d0" strokeWidth="2.600" /></Icon>
        <BareInput type="search" placeholder="搜索" aria-label="搜索" />
      </SearchBox>
      <PlainButton aria-label="表格视图">
        <Icon w={22}>
          <path d="M0 2Q0 0 2 0H20Q22 0 22 2V20Q22 22 20 22H2Q0 22 0 20Z" fill="#c4c4c4" />
          <path d="M3 4.500H19M3 10.500H9.500M12.500 10.500H19M3 14.500H9.500M12.500 14.500H19M3 18.500H9.500M12.500 18.500H19" stroke="#242424" strokeWidth="2" strokeLinecap="butt" />
        </Icon>
      </PlainButton>
      <PlainButton aria-label="设置">
        <Icon w={23} box="-11.5 -11.5 23 23">
          {[0, 45, 90, 135].map((a) => (
            <path key={a} d="M0 -11V-7M0 11V7" stroke="#c4c4c4" strokeWidth="3.200" strokeLinecap="butt" transform={`rotate(${a})`} />
          ))}
          <circle r="7" stroke="#c4c4c4" strokeWidth="2.400" />
          <circle r="3" stroke="#8a8a8a" strokeWidth="1.600" />
        </Icon>
      </PlainButton>
    </SearchRow>
    <DetailBody>
      <DetailPair>
        <DetailRow $heading><DetailCell $tone={c.header}><Caret color="#8b8b8b" />选项</DetailCell></DetailRow>
        <DetailRow>
          <DetailCell $inset>选定骨骼</DetailCell>
          <ValueCell><ReadonlyBox readOnly value="ball_r" aria-label="选定骨骼" /></ValueCell>
          <DetailCell />
        </DetailRow>
      </DetailPair>
      <DetailPair>
        <DetailRow $heading><DetailCell $tone={c.header}><Caret color="#8b8b8b" />变换</DetailCell></DetailRow>
        <DetailRow>
          <DetailCell />
          <ValueCell><ModeSwitch><ModeButton $on>当前</ModeButton><ModeButton>参考</ModeButton></ModeSwitch></ValueCell>
          <DetailCell />
        </DetailRow>
      </DetailPair>
      <DetailPair>
        <DetailRow><DetailCell><Caret color="#8b8b8b" />当前</DetailCell><DetailCell /><DetailCell /></DetailRow>
        <TransformRow label="位置" name="位置" values={["7.59339", "-14.063257", "-0.43145"]} />
      </DetailPair>
      <DetailPair>
        <TransformRow
          label={
            <SelectWrap>
              <RotationSelect aria-label="旋转模式"><option>旋转</option></RotationSelect>
              <ChevronIcon />
            </SelectWrap>
          }
          name="旋转"
          values={["0.0 °", "-0.0 °", "90.0 °"]}
          fillLast
        />
        <TransformRow label="缩放" name="缩放" values={["1.0", "1.0", "1.0"]} />
      </DetailPair>
    </DetailBody>
  </Dock>
);

/* ---------- retarget chains ---------- */
const chains: [string, string, string][] = [
  ["upperarm_r", "upperarm_r", "upperarm_r"],
  ["forearm_r", "lowerarm_r", "lowerarm_r"],
  ["hand_r", "hand_r", "hand_r"],
  ["thumb_r", "thumb_01_r", "thumb_03_r"],
  ["index_r", "index_01_r", "index_03_r"],
  ["middle_r", "middle_01_r", "middle_03_r"],
  ["ring_r", "ring_01_r", "ring_03_r"],
  ["pinky_r", "pinky_01_r", "pinky_03_r"],
  ["upperleg_l", "thigh_l", "thigh_l"],
  ["calf_l", "calf_l", "calf_l"],
  ["foot_l", "foot_l", "ball_l"],
  ["upperleg_r", "thigh_r", "thigh_r"],
];
const RetargetTools = styled.div`
  flex: none;
  padding-left: 1px;
  background: ${c.panel};
`;
const RootRow = styled.div`
  display: flex;
  align-items: center;
  gap: 8px;
  height: 44px;
  padding-left: 3px;
`;
const nameSkin = css`
  field-sizing: content;
  height: 33px;
  padding: 0 11px 5px;
  border: 2px solid #2c2c2c;
  border-radius: 6px;
  font-weight: 700;
`;
const RootName = styled.input`
  ${nameSkin}
  border-color: ${c.button};
  background: ${c.header};
`;
const ChainName = styled.input`
  ${nameSkin}
  background: ${c.field};
`;
const ChainArea = styled.div`
  display: flex;
  flex: 1;
  gap: 7px;
  min-height: 0;
  padding-right: 6px;
  background: ${c.recess};
`;
const ChainTable = styled.table`
  display: flex;
  flex: 1;
  flex-direction: column;
  gap: 3px;
  min-height: 0;
  thead { display: block; flex: none; }
  tbody { display: block; flex: 1; min-height: 0; overflow: hidden; }
  tr { display: grid; grid-template-columns: repeat(4, 1fr); }
  th {
    height: 36px;
    padding: 6px 5px 0;
    border-right: 1px solid ${c.title};
    background: ${c.header};
    font-weight: 400;
    text-align: left;
  }
  tbody tr { height: 43px; }
  tbody tr:nth-child(even) { height: 44px; }
  tbody tr:first-child { margin-top: -18px; }
  td { display: flex; align-items: center; gap: 9px; padding: 0 0 0 5px; }
`;
const DeleteButton = styled.button`
  display: flex;
  align-items: center;
  flex: 1;
  height: 33px;
  padding: 0 0 0 25px;
  border: 1px solid ${c.title};
  border-right: 0;
  border-radius: 6px 0 0 6px;
  background: ${c.button};
`;

const Retarget = () => (
  <Dock>
    <TabStrip $gap={3}>
      <DockTab icon={<RunnerIcon />} label="资产浏览器" />
      <DockTab icon={<RunnerIcon />} label="IK重定向" active onClose />
    </TabStrip>
    <RetargetTools>
      <RootRow>
        <label htmlFor="root-bone">重定向根：</label>
        <RootName id="root-bone" readOnly value="pelvis" />
      </RootRow>
      <AddButton $height={33} $pad={24}><PlusIcon />新增链条</AddButton>
    </RetargetTools>
    <ChainArea>
      <ChainTable>
        <thead>
          <tr><th>链名称</th><th>初始骨骼</th><th>末端骨骼</th><th>IK目标</th></tr>
        </thead>
        <tbody>
          {chains.map(([name, start, end]) => (
            <tr key={name}>
              <td><ChainName aria-label="链名称" defaultValue={name} /></td>
              <td>
                <SelectWrap><BoneSelect aria-label="初始骨骼"><option>{start}</option></BoneSelect><ChevronIcon /></SelectWrap>
              </td>
              <td>
                <SelectWrap><BoneSelect aria-label="末端骨骼"><option>{end}</option></BoneSelect><ChevronIcon /></SelectWrap>
              </td>
              <td>
                <SelectWrap><GoalSelect aria-label="IK目标"><option>None</option></GoalSelect><ChevronIcon /></SelectWrap>
                <DeleteButton aria-label="删除"><TrashIcon /></DeleteButton>
              </td>
            </tr>
          ))}
        </tbody>
      </ChainTable>
      <ScrollTrack before={255} thumb={249} after={38} />
    </ChainArea>
  </Dock>
);

/* ---------- status bar ---------- */
const StatusBar = styled.footer`
  position: relative;
  display: flex;
  flex: none;
  gap: 3px;
  height: 48px;
  padding: 0 4px 0 1px;
`;
const StatusCell = styled.div<{ $grow?: boolean; $left?: number; $right?: number }>`
  display: flex;
  align-items: center;
  flex: ${(p) => (p.$grow ? "1" : "none")};
  gap: 10px;
  padding: 0 ${(p) => p.$right ?? 16}px 0 ${(p) => p.$left ?? 17}px;
  background: ${c.panel};
`;
const ConsoleInput = styled.input`
  width: 398px;
  height: 32px;
  margin-left: 10px;
  padding: 0 11px 2px;
  border: 2px solid ${c.line};
  border-radius: 6px;
  background: ${c.field};
  font-size: 18px;
  &::placeholder { color: #565656; opacity: 1; }
`;
const Watermark = styled.span`
  position: absolute;
  right: 15px;
  bottom: -4px;
  color: #c4c4c4;
  font-size: 18px;
  text-shadow: 1px 1px 1px #000000;
`;

export default function App() {
  return (
    <>
      <GlobalStyle />
      <Window>
        <TitleBar>
          <LogoBox><Logo /></LogoBox>
          <TitleMain>
            <MenuBar>
              {["文件", "编辑", "资产", "窗口", "工具", "帮助"].map((m) => (
                <PlainButton key={m}>{m}</PlainButton>
              ))}
            </MenuBar>
            <DocTab>
              <CubeBadge />
              <span>MTalUnwBody_IKRig</span>
              <PlainButton aria-label="关闭标签"><CloseIcon size={13} /></PlainButton>
            </DocTab>
          </TitleMain>
          <WindowButtons>
            <PlainButton aria-label="最小化"><Icon w={18}><path d="M2 10H16" stroke="#c8c8c8" strokeWidth="1.500" /></Icon></PlainButton>
            <PlainButton aria-label="还原">
              <Icon w={18}><path d="M2 6H12V15.500H2ZM5.500 6V2.500H15.500V12H12" stroke="#c8c8c8" strokeWidth="1.500" /></Icon>
            </PlainButton>
            <PlainButton aria-label="关闭窗口"><Icon w={18}><path d="M1.500 1.500L16.500 16.500M16.500 1.500L1.500 16.500" stroke="#c8c8c8" strokeWidth="1.500" /></Icon></PlainButton>
          </WindowButtons>
        </TitleBar>
        <Toolbar>
          <ToolbarGroup>
            <PlainButton><SaveIcon />保存</PlainButton>
            <PlainButton><BrowseIcon />浏览</PlainButton>
          </ToolbarGroup>
          <ToolbarGroup>
            <PlainButton><ResetIcon />重设</PlainButton>
          </ToolbarGroup>
        </Toolbar>
        <Workspace>
          <Column $rows="minmax(0, 973fr) minmax(0, 340fr)" $gap={8}>
            <Dock>
              <TabStrip><DockTab icon={<RunnerIcon />} label="层级" active onClose /></TabStrip>
              <Hierarchy />
            </Dock>
            <Dock>
              <TabStrip><DockTab icon={<RunnerIcon />} label="解算器堆栈" active onClose /></TabStrip>
              <StackToolbar><AddButton $height={36} $pad={20}><PlusIcon />新增解算器</AddButton></StackToolbar>
              <EmptyBody />
            </Dock>
          </Column>
          <ViewportPanel />
          <Column $rows="minmax(0, 1fr) minmax(0, 1fr)" $gap={7}>
            <Details />
            <Retarget />
          </Column>
        </Workspace>
        <StatusBar>
          <StatusCell $left={16} $right={15}>
            <PlainButton><BrowseIcon size={24} />内容侧滑菜单</PlainButton>
          </StatusCell>
          <StatusCell $left={18} $right={16}>
            <PlainButton>
              <Icon w={20} h={24}>
                <path d="M0 4H18V24H0Z" fill="#c4c4c4" />
                <path d="M2.500 1V5M7 1V5M11.500 1V5M16 1V5" stroke="#c4c4c4" strokeWidth="2" />
                <path d="M3.500 11L7.500 14.500L3.500 18M9.500 19H14" stroke="#242424" strokeWidth="2" />
              </Icon>
              输出日志
            </PlainButton>
          </StatusCell>
          <StatusCell $left={21} $right={13}>
            <PlainButton>
              <Icon w={25} h={20}>
                <path d="M1 1H23V19H1Z" stroke="#c4c4c4" strokeWidth="1.600" />
                <path d="M1 1H23V4H1Z" fill="#c4c4c4" />
                <path d="M5 8L10 11.500L5 15M12 16H18" stroke="#c4c4c4" strokeWidth="1.800" />
              </Icon>
              Cmd
            </PlainButton>
            <ChevronIcon />
            <ConsoleInput placeholder="输入控制台命令" aria-label="输入控制台命令" />
          </StatusCell>
          <StatusCell $grow />
          <StatusCell $left={19} $right={23}>
            <PlainButton>
              <Icon w={24} h={22}><circle cx="11" cy="11" r="9.700" stroke="#c4c4c4" strokeWidth="2" /><path d="M4.500 17.500L17.500 4.500" stroke="#c4c4c4" strokeWidth="2" /></Icon>
              源码管理关闭
            </PlainButton>
          </StatusCell>
          <Watermark>CSDN @病毒宇宇</Watermark>
        </StatusBar>
      </Window>
    </>
  );
}
